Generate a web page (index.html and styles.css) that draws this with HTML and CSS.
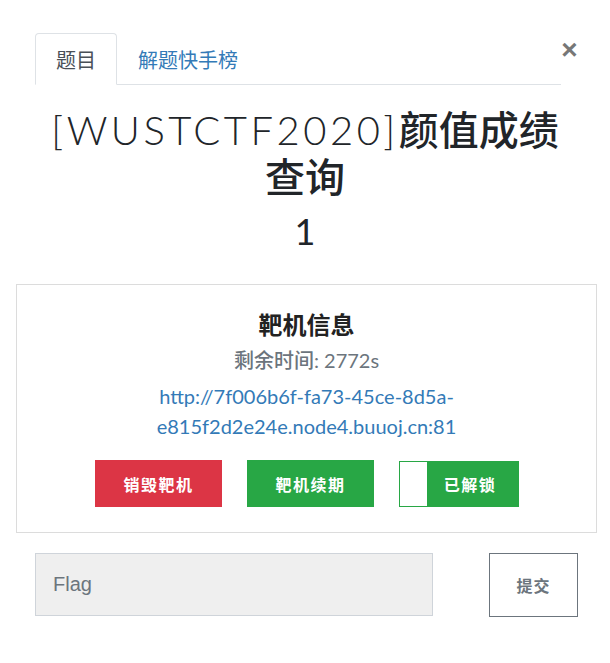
FILE: index.html
```html
<!DOCTYPE html>
<html lang="zh">
<head>
<meta charset="utf-8">
<link rel="stylesheet" href="styles.css">
</head>
<body>
<div class="modal">
  <div class="header">
    <ul class="tabs">
      <li class="tab active">题目</li>
      <li class="tab">解题快手榜</li>
    </ul>
    <button class="close" type="button">×</button>
  </div>
  <h2 class="title"><span class="latin">[WUSTCTF2020]</span><span class="cjk">颜值成绩查询</span></h2>
  <div class="score">1</div>
  <div class="card">
    <h4 class="card-title">靶机信息</h4>
    <div class="time"><b>剩余时间</b>: 2772s</div>
    <a class="url" href="#">http://7f006b6f-fa73-45ce-8d5a-<br>e815f2d2e24e.node4.buuoj.cn:81</a>
    <div class="actions">
      <button class="btn btn-red" type="button">销毁靶机</button>
      <button class="btn btn-green" type="button">靶机续期</button>
      <button class="btn btn-toggle" type="button"><span class="knob"></span><span class="label">已解锁</span></button>
    </div>
  </div>
  <div class="flag-row">
    <input class="flag" type="text" placeholder="Flag">
    <button class="submit" type="button">提交</button>
  </div>
</div>
</body>
</html>
```

FILE: styles.css
```css
* { box-sizing: border-box; }
body {
  margin: 0;
  background: #fff;
  font-family: Lato, "Noto Sans CJK SC", sans-serif;
  color: #212529;
}
.modal {
  width: 610px;
  padding-top: 33px;
}
.header {
  display: flex;
  align-items: flex-start;
  padding: 0 32px 0 35px;
}
.tabs {
  flex: 1;
  display: flex;
  list-style: none;
  margin: 0;
  padding: 0;
  border-bottom: 1px solid #dee2e6;
}
.tab {
  padding: 11px 20px 10px;
  font-size: 20px;
  line-height: 29px;
  color: #337ab7;
  border: 1px solid transparent;
  border-radius: 4px 4px 0 0;
  margin-bottom: -1px;
  font-family: "Noto Sans CJK SC", sans-serif;
}
.tab.active {
  color: #495057;
  border-color: #dee2e6 #dee2e6 #fff;
  background: #fff;
}
.close {
  border: 0;
  background: none;
  padding: 0;
  margin: 3px 0 0 0;
  width: 17px;
  font-size: 28px;
  line-height: 28px;
  font-weight: 700;
  color: #777;
  font-family: "Liberation Sans", sans-serif;
}
.title {
  margin: 21px 40px 0;
  text-align: center;
  font-weight: 300;
  font-size: 40px;
  line-height: 45px;
  color: #212529;
}
.title .latin {
  font-family: Lato, sans-serif;
  font-weight: 300;
  letter-spacing: 3.5px;
}
.title .cjk {
  font-family: "Noto Sans CJK SC", sans-serif;
  font-weight: 500;
}
.score {
  margin-top: 9px;
  text-align: center;
  font-size: 36px;
  line-height: 44px;
  font-weight: 400;
  color: #212529;
}
.card {
  margin: 31px 13px 0 16px;
  border: 1px solid #dcdcdc;
  display: flex;
  flex-direction: column;
  align-items: center;
  padding: 23px 0 25px;
}
.card-title {
  margin: 0;
  font-size: 24px;
  line-height: 32px;
  font-weight: 700;
  color: #222;
  font-family: "Noto Sans CJK SC", sans-serif;
}
.time {
  margin-top: 6px;
  font-size: 20px;
  line-height: 28px;
  color: #6c757d;
}
.time b {
  font-weight: 500;
  font-family: "Noto Sans CJK SC", sans-serif;
}
.url {
  margin-top: 7px;
  text-align: center;
  font-size: 20px;
  line-height: 30px;
  color: #337ab7;
  text-decoration: none;
}
.actions {
  display: flex;
  gap: 25px;
  margin-top: 19px;
  margin-left: 1px;
}
.btn {
  height: 47px;
  width: 127px;
  border: 0;
  color: #fff;
  font-size: 16px;
  font-weight: 700;
  letter-spacing: 1.5px;
  font-family: "Noto Sans CJK SC", sans-serif;
  padding: 0;
}
.btn-red { background: #dc3545; }
.btn-green { background: #28a745; }
.btn-toggle {
  width: 120px;
  height: 46px;
  margin-top: 1px;
  display: flex;
  align-items: stretch;
  border: 1px solid #28a745;
  background: #28a745;
}
.btn-toggle .knob {
  width: 27px;
  background: #fff;
}
.btn-toggle .label {
  flex: 1;
  display: flex;
  align-items: center;
  justify-content: center;
  padding-right: 5px;
}
.flag-row {
  display: flex;
  justify-content: space-between;
  padding: 0 32px 0 35px;
  margin-top: 20px;
}
.flag {
  width: 398px;
  height: 63px;
  background: #efefef;
  border: 1px solid #cfd4da;
  padding: 0 17px;
  font-size: 20px;
  font-family: "Liberation Sans", sans-serif;
  color: #495057;
  outline: none;
}
.flag::placeholder { color: #6c757d; }
.submit {
  width: 89px;
  height: 64px;
  background: #fff;
  border: 1px solid #6c757d;
  color: #6c757d;
  font-size: 16px;
  font-weight: 700;
  font-family: "Noto Sans CJK SC", sans-serif;
  letter-spacing: 1px;
  padding: 0;
}
```
